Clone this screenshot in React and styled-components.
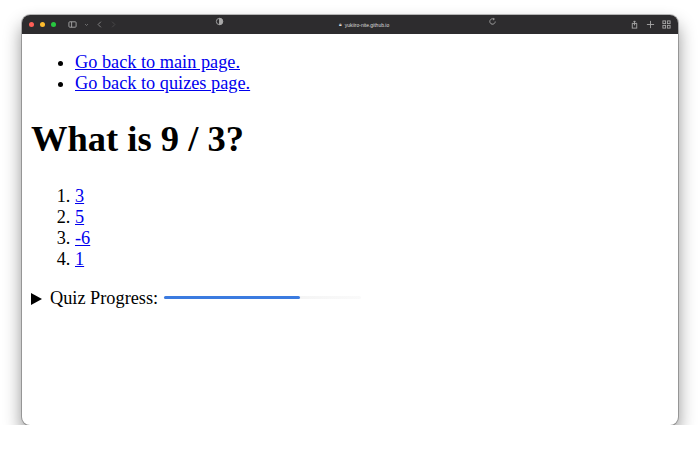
import React from 'react';
import styled, { createGlobalStyle } from 'styled-components';

const Global = createGlobalStyle`
  html, body { margin: 0; background: #fff; }
`;

const Window = styled.div`
  margin: 15px 22px 0;
  height: 410px;
  border-radius: 8px;
  overflow: hidden;
  background: #fff;
  box-shadow: 0 10px 18px rgba(0,0,0,0.45), 0 0 0 1px rgba(0,0,0,0.25);
  display: flex;
  flex-direction: column;
`;

const TitleBar = styled.div`
  height: 19px;
  background: #2d2c2e;
  display: flex;
  align-items: center;
  padding: 0 7px;
  gap: 4px;
  color: #a8a8a8;
  font-family: "Liberation Sans", sans-serif;
`;

const Light = styled.span`
  width: 5px;
  height: 5px;
  border-radius: 50%;
  background: ${p => p.$c};
  margin-right: 2px;
`;

const Address = styled.div`
  flex: none;
  width: 286px;
  margin-left: 92px;
  display: flex;
  align-items: center;
  justify-content: center;
  gap: 3px;
  padding-left: 16px;
  box-sizing: border-box;
  font-size: 5px;
  color: #ddd;
  position: relative;
`;

const Icons = styled.div`
  display: flex;
  gap: 7px;
  align-items: center;
  margin-left: ${p => p.$auto ? 'auto' : '6px'};
`;

const Side = styled.span`
  position: absolute;
  top: -4px;
  ${p => p.$side}: 2px;
`;

const Page = styled.div`
  flex: 1;
  padding: 0 9px;
  font-family: "Liberation Serif", "Times New Roman", serif;
  font-size: 18.3px;
  line-height: 21px;
  color: #000;
  overflow: hidden;
`;

const Ul = styled.ul`
  margin: 18px 0;
  padding-left: 44px;
`;

const Ol = styled.ol`
  margin: 27px 0 18px;
  padding-left: 44px;
`;

const Link = styled.a`
  color: #0000ee;
  text-decoration: underline;
`;

const H1 = styled.h1`
  font-size: 36.5px;
  line-height: 41px;
  margin: 24px 0;
`;

const Summary = styled.div`
  display: flex;
  align-items: center;
  margin-top: 2px;
`;

const Triangle = styled.span`
  width: 0;
  height: 0;
  border-left: 11px solid #000;
  border-top: 6px solid transparent;
  border-bottom: 6px solid transparent;
  margin-right: 8px;
`;

const Track = styled.div`
  margin-left: 6px;
  width: 197px;
  height: 3px;
  border-radius: 2px;
  background: linear-gradient(to right, #e8e8e8, #fafafa);
  position: relative;
  top: -1px;
`;

const Fill = styled.div`
  height: 100%;
  border-radius: 2px;
  background: #3b7be0;
`;

const Icon = ({ children, w = 9 }) => (
  <svg width={w} height="9" viewBox="0 0 10 10" fill="none" stroke="#a8a8a8" strokeWidth="1">{children}</svg>
);

export default function App() {
  const progress = 0.69;
  return (
    <>
      <Global />
      <Window>
        <TitleBar>
          <Light $c="#fe5f57" />
          <Light $c="#febc2e" />
          <Light $c="#28c840" />
          <Icons>
            <Icon><rect x="1" y="2" width="8" height="6" rx="1" /><line x1="4" y1="2" x2="4" y2="8" /></Icon>
            <Icon w={5}><polyline points="2,4 5,7 8,4" /></Icon>
            <Icon w={7}><polyline points="7,1 3,5 7,9" /></Icon>
            <Icon w={7}><polyline points="3,1 7,5 3,9" stroke="#555" /></Icon>
          </Icons>
          <Address>
            <Side $side="left">
              <Icon><circle cx="5" cy="5" r="3.5" /><path d="M5 1.5 A3.5 3.5 0 0 1 5 8.5 Z" fill="#a8a8a8" /></Icon>
            </Side>
            <span>🔒︎</span>
            <span>yukiiro-nite.github.io</span>
            <Side $side="right">
              <Icon><path d="M8 5 A3 3 0 1 1 6.5 2.4" /><polyline points="6,1 7,2.5 5.5,3.3" /></Icon>
            </Side>
          </Address>
          <Icons $auto>
            <Icon><rect x="2.5" y="4" width="5" height="5" /><line x1="5" y1="1" x2="5" y2="6" /><polyline points="3.5,2.5 5,1 6.5,2.5" /></Icon>
            <Icon><line x1="5" y1="1" x2="5" y2="9" /><line x1="1" y1="5" x2="9" y2="5" /></Icon>
            <Icon><rect x="1" y="1" width="3" height="3" /><rect x="6" y="1" width="3" height="3" /><rect x="1" y="6" width="3" height="3" /><rect x="6" y="6" width="3" height="3" /></Icon>
          </Icons>
        </TitleBar>
        <Page>
          <Ul>
            <li><Link href="#">Go back to main page.</Link></li>
            <li><Link href="#">Go back to quizes page.</Link></li>
          </Ul>
          <H1>What is 9 / 3?</H1>
          <Ol>
            {['3', '5', '-6', '1'].map(a => (
              <li key={a}><Link href="#">{a}</Link></li>
            ))}
          </Ol>
          <Summary>
            <Triangle />
            Quiz Progress:
            <Track><Fill style={{ width: `${progress * 100}%` }} /></Track>
          </Summary>
        </Page>
      </Window>
    </>
  );
}
